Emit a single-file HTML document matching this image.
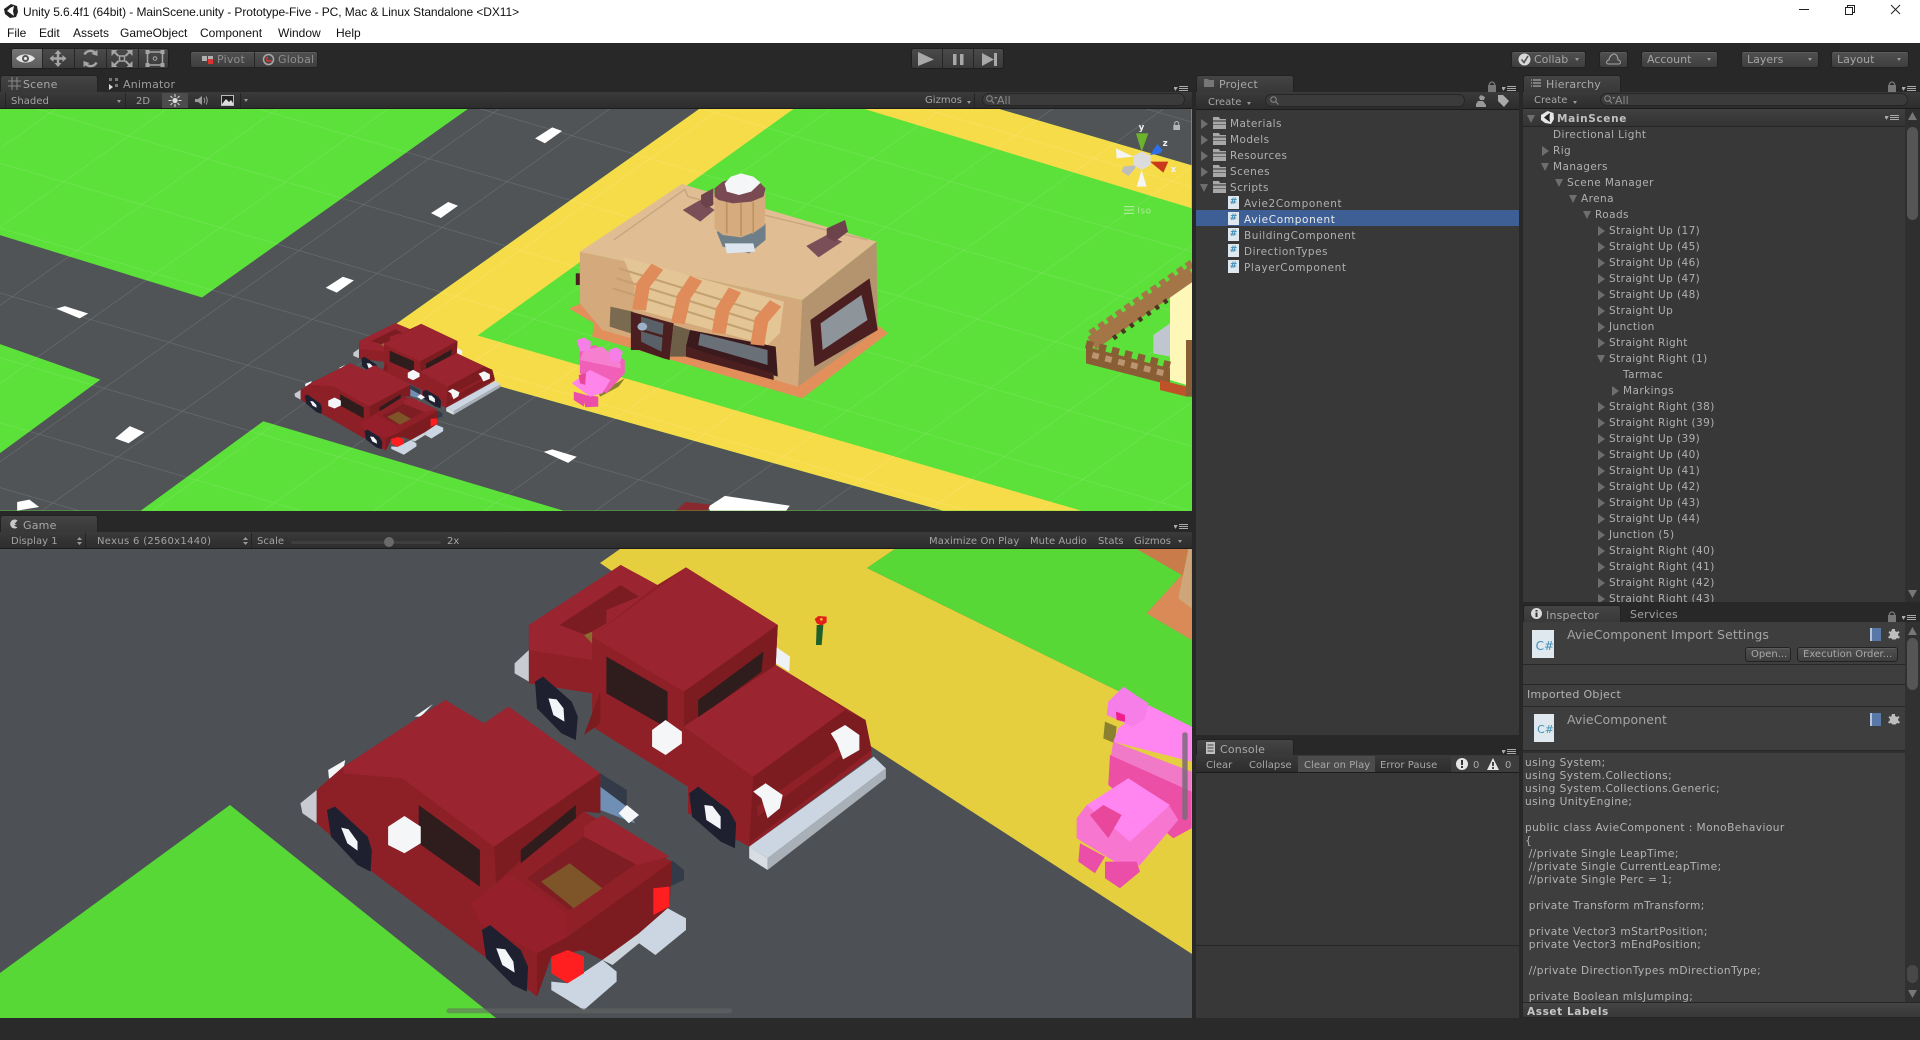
<!DOCTYPE html>
<html><head><meta charset="utf-8"><title>Unity</title>
<style>
html,body{margin:0;padding:0;width:1920px;height:1040px;overflow:hidden;background:#2a2a2a}
body{position:relative;font-family:"DejaVu Sans","Liberation Sans",sans-serif;font-size:10.5px;color:#b0b0b0}
.b{position:absolute;box-sizing:border-box}
.t{position:absolute;white-space:nowrap;line-height:18px;height:16px;letter-spacing:.42px}
.t[style*="font-size:10px"]{letter-spacing:.03px}
.t[style*="font-size:11px"]{letter-spacing:.2px}
.t[style*="font-size:12.5px"]{letter-spacing:.08px}
.a::before,.o::before{content:"";position:absolute;top:4px;left:-11px}
.a::before{border-left:7px solid #6e6e6e;border-top:5px solid transparent;border-bottom:5px solid transparent}
.o::before{left:-12px;top:5px;border-top:8px solid #6e6e6e;border-left:4.5px solid transparent;border-right:4.5px solid transparent}
.tab{position:absolute;box-sizing:border-box;background:linear-gradient(#444,#383838);border:1px solid #222;border-bottom:0;border-radius:3px 3px 0 0}
.btn{position:absolute;box-sizing:border-box;background:linear-gradient(#505050,#3e3e3e);border:1px solid #222;border-radius:3px;box-shadow:inset 0 1px 0 #5c5c5c;line-height:15px;text-align:left;white-space:nowrap}
.caret{position:absolute;width:0;height:0;border-top:3px solid #999;border-left:2.5px solid transparent;border-right:2.5px solid transparent}
.bar{position:absolute;box-sizing:border-box;background:linear-gradient(#3a3a3a,#2d2d2d);border-bottom:1px solid #1c1c1c}
.search{position:absolute;box-sizing:border-box;background:#3b3b3b;border-radius:8px;border:1px solid #262626;color:#8a8a8a;line-height:13px;padding-left:14px;font-size:11px}
.cs{position:absolute;background:#dfe8ee;color:#3f8fb5;font-weight:bold;text-align:center;overflow:hidden;box-sizing:border-box}
.code{position:absolute;white-space:pre;line-height:13px;font-size:10.6px;color:#b4b4b4;letter-spacing:.43px}
svg{position:absolute;display:block}
</style></head><body>

<!-- title / menu -->
<div class="b" style="left:0;top:0;width:1920px;height:43px;background:#fff"></div>
<svg style="left:3px;top:3px" width="16" height="16" viewBox="0 0 16 16"><path d="M8 1 14 3 15 9 13 14 7 15 2 11 1 6Z" fill="#222"/><path d="M7 5 11 3 10 8 11 13 7 10 4 8Z" fill="#fff"/></svg>
<div class="b" style="left:23px;top:4px;height:16px;white-space:nowrap;color:#111;font:12px/16px 'Liberation Sans',sans-serif;letter-spacing:-.08px">Unity 5.6.4f1 (64bit) - MainScene.unity - Prototype-Five - PC, Mac &amp; Linux Standalone &lt;DX11&gt;</div>
<div class="b" style="left:7px;top:25px;color:#111;font:12px/16px 'Liberation Sans',sans-serif">File</div>
<div class="b" style="left:39px;top:25px;color:#111;font:12px/16px 'Liberation Sans',sans-serif">Edit</div>
<div class="b" style="left:73px;top:25px;color:#111;font:12px/16px 'Liberation Sans',sans-serif">Assets</div>
<div class="b" style="left:120px;top:25px;color:#111;font:12px/16px 'Liberation Sans',sans-serif">GameObject</div>
<div class="b" style="left:200px;top:25px;color:#111;font:12px/16px 'Liberation Sans',sans-serif">Component</div>
<div class="b" style="left:278px;top:25px;color:#111;font:12px/16px 'Liberation Sans',sans-serif">Window</div>
<div class="b" style="left:336px;top:25px;color:#111;font:12px/16px 'Liberation Sans',sans-serif">Help</div>
<svg style="left:1789px;top:0" width="125" height="20" viewBox="0 0 125 20"><path d="M10 9.5h10" stroke="#222"/><path d="M56.500 7.500h7v7h-7zM58.500 7.500v-2h7v7h-2" fill="none" stroke="#222"/><path d="M102 5 111 14M111 5 102 14" stroke="#222"/></svg>

<!-- main toolbar -->
<div class="b" style="left:0;top:43px;width:1920px;height:32px;background:#282828"></div>
<div class="b" style="left:11px;top:48px;width:158px;height:21px;background:linear-gradient(#4a4a4a,#3a3a3a);border:1px solid #1f1f1f;border-radius:3px"></div>
<div class="b" style="left:12px;top:49px;width:30px;height:19px;background:linear-gradient(#767676,#5c5c5c);border-radius:2px 0 0 2px"></div>
<div class="b" style="left:74px;top:49px;width:1px;height:19px;background:#262626"></div>
<div class="b" style="left:106px;top:49px;width:1px;height:19px;background:#262626"></div>
<div class="b" style="left:138px;top:49px;width:1px;height:19px;background:#262626"></div>
<div class="b" style="left:42px;top:49px;width:1px;height:19px;background:#262626"></div>
<svg style="left:11px;top:48px" width="158" height="21" viewBox="0 0 158 21">
<path d="M5 10.500C9 5 20 5 24 10.500 20 16 9 16 5 10.500Z" fill="#e6e6e6"/><circle cx="14.500" cy="10.500" r="3.500" fill="#555"/><circle cx="14.500" cy="10.500" r="1.500" fill="#eee"/>
<path d="M47 2 50.500 6H48.200V9.300H51.500V7L55.500 10.500 51.500 14V11.700H48.200V15H50.500L47 19 43.500 15H45.800V11.700H42.500V14L38.500 10.500 42.500 7V9.300H45.800V6H43.500Z" fill="#a5a5a5"/>
<g transform="translate(13.500 0)"><path d="M71 5.500A6.500 6.500 0 0 0 60 6.500M61 15.500A6.500 6.500 0 0 0 72 14.500" fill="none" stroke="#a5a5a5" stroke-width="2.500"/><path d="M67 6 73 8 73 2ZM65 15 59 13 59 19Z" fill="#a5a5a5"/></g>
<g transform="translate(17.500 0)"><path d="M85 3 90 8M102 3 97 8M85 18 90 13M102 18 97 13" fill="none" stroke="#a5a5a5" stroke-width="2"/><rect x="91" y="8" width="5" height="5" fill="none" stroke="#a5a5a5" stroke-width="1.500"/><path d="M83 2H89L83 8ZM104 2V8L98 2ZM83 19V13L89 19ZM104 19H98L104 13Z" fill="#a5a5a5"/></g>
<g transform="translate(17.500 0)"><rect x="119" y="4" width="15" height="13" fill="none" stroke="#a5a5a5" stroke-width="1.500"/><rect x="117" y="2" width="4" height="4" fill="#a5a5a5"/><rect x="132" y="2" width="4" height="4" fill="#a5a5a5"/><rect x="117" y="15" width="4" height="4" fill="#a5a5a5"/><rect x="132" y="15" width="4" height="4" fill="#a5a5a5"/><circle cx="126.500" cy="10.500" r="1.800" fill="none" stroke="#a5a5a5"/></g>
</svg>
<div class="btn" style="left:190px;top:51px;width:128px;height:17px"></div>
<div class="b" style="left:254px;top:52px;width:1px;height:15px;background:#262626"></div>
<svg style="left:202px;top:54px" width="12" height="11" viewBox="0 0 12 11"><rect x="0" y="2" width="5" height="5" fill="#b0b0b0"/><rect x="6" y="2" width="5" height="5" fill="#b0b0b0"/><rect x="6" y="5" width="5" height="5" fill="#d33"/></svg>
<div class="t" style="left:217px;top:51px;color:#8e8e8e;font-size:11px">Pivot</div>
<svg style="left:262px;top:53px" width="13" height="13" viewBox="0 0 13 13"><circle cx="6.500" cy="6.500" r="5" fill="none" stroke="#aaa" stroke-width="1.500"/><path d="M5 4V8H10" fill="none" stroke="#d33" stroke-width="1.500"/></svg>
<div class="t" style="left:278px;top:51px;color:#8e8e8e;font-size:11px">Global</div>

<div class="b" style="left:911px;top:48px;width:93px;height:21px;background:linear-gradient(#4a4a4a,#3a3a3a);border:1px solid #1f1f1f;border-radius:3px"></div>
<div class="b" style="left:942px;top:49px;width:1px;height:19px;background:#262626"></div>
<div class="b" style="left:973px;top:49px;width:1px;height:19px;background:#262626"></div>
<svg style="left:911px;top:48px" width="93" height="21" viewBox="0 0 93 21"><path d="M7 4 23 11.500 7 18Z" fill="#a8a8a8"/><rect x="42" y="6" width="3.500" height="11" fill="#a8a8a8"/><rect x="49" y="6" width="3.500" height="11" fill="#a8a8a8"/><path d="M71 5 83 11.500 71 18Z" fill="#a8a8a8"/><rect x="83" y="5" width="3" height="13" fill="#a8a8a8"/></svg>

<div class="btn" style="left:1511px;top:51px;width:75px;height:17px;padding-left:22px;color:#a4a4a4;font-size:11px">Collab</div>
<svg style="left:1518px;top:53px" width="13" height="13" viewBox="0 0 13 13"><circle cx="6.500" cy="6.500" r="6" fill="#d8d8d8"/><path d="M3.500 6.500 6 9.500 10 3" fill="none" stroke="#555" stroke-width="1.600"/></svg>
<div class="caret" style="left:1575px;top:58px"></div>
<div class="btn" style="left:1599px;top:51px;width:29px;height:17px"></div>
<svg style="left:1606px;top:53px" width="15" height="12" viewBox="0 0 15 12"><path d="M2 11C0 11 0 7 3 7 3 4 6 1 8 1 11 1 12 5 12 7 15 7 15 11 13 11Z" fill="none" stroke="#a8a8a8"/></svg>
<div class="btn" style="left:1641px;top:51px;width:77px;height:17px;padding-left:5px;color:#a4a4a4;font-size:11px">Account</div>
<div class="caret" style="left:1707px;top:58px"></div>
<div class="btn" style="left:1741px;top:51px;width:78px;height:17px;padding-left:5px;color:#a4a4a4;font-size:11px">Layers</div>
<div class="caret" style="left:1808px;top:58px"></div>
<div class="btn" style="left:1831px;top:51px;width:78px;height:17px;padding-left:5px;color:#a4a4a4;font-size:11px">Layout</div>
<div class="caret" style="left:1897px;top:58px"></div>

<!-- scene header -->
<div class="b" style="left:0;top:75px;width:1192px;height:17px;background:#282828"></div>
<div class="tab" style="left:0;top:75px;width:98px;height:17px"></div>
<svg style="left:8px;top:77px" width="13" height="13" viewBox="0 0 13 13"><path d="M4 0V13M9 0V13M0 4H13M0 9H13" stroke="#888"/></svg>
<div class="t" style="left:23px;top:76px;font-size:11px;color:#a8a8a8">Scene</div>
<svg style="left:108px;top:78px" width="12" height="13" viewBox="0 0 12 13"><rect x="1" y="0" width="3" height="3" fill="#777"/><rect x="7" y="0" width="3" height="3" fill="#777"/><rect x="7" y="6" width="3" height="3" fill="#777"/><path d="M1 6 5 9 1 12Z" fill="#ddd"/></svg>
<div class="t" style="left:123px;top:76px;font-size:11px;color:#9c9c9c">Animator</div>
<svg style="left:1174px;top:86px" width="16" height="6" viewBox="0 0 16 6"><path d="M0 1.500H3L1.500 4ZM5 .5H14M5 2.500H14M5 4.500H14" fill="#aaa" stroke="#aaa" stroke-width=".9"/></svg>
<div class="bar" style="left:0;top:92px;width:1192px;height:17px"></div>
<div class="t" style="left:11px;top:93px;font-size:10px;color:#a4a4a4">Shaded</div>
<div class="caret" style="left:117px;top:100px"></div>
<div class="b" style="left:5px;top:93px;width:1px;height:15px;background:#242424"></div>
<div class="b" style="left:125px;top:93px;width:1px;height:15px;background:#242424"></div>
<div class="t" style="left:136px;top:93px;font-size:10px;color:#a4a4a4">2D</div>
<div class="b" style="left:162px;top:93px;width:26px;height:15px;background:#4c4c4c"></div>
<svg style="left:168px;top:94px" width="14" height="13" viewBox="0 0 14 13"><circle cx="7" cy="6.500" r="2.600" fill="#ddd"/><path d="M7 0V3M7 10V13M0.500 6.500H3.500M10.500 6.500H13.500M2.500 2 4.500 4M11.500 2 9.500 4M2.500 11 4.500 9M11.500 11 9.500 9" stroke="#ddd"/></svg>
<svg style="left:195px;top:94px" width="14" height="13" viewBox="0 0 14 13"><path d="M0 5H3L7 2V11L3 8H0Z" fill="#999"/><path d="M9 4Q10.500 6.500 9 9M11 2.500Q13.500 6.500 11 10.500" fill="none" stroke="#999"/></svg>
<svg style="left:221px;top:95px" width="13" height="11" viewBox="0 0 13 11"><rect x=".5" y=".5" width="12" height="10" fill="#222" stroke="#bbb"/><path d="M1 9 5 4 8 7 10 5 12 8V10H1Z" fill="#ddd"/></svg>
<div class="b" style="left:240px;top:93px;width:1px;height:15px;background:#242424"></div>
<div class="caret" style="left:244px;top:99px"></div>
<div class="t" style="left:925px;top:92px;font-size:10px;color:#a4a4a4">Gizmos</div>
<div class="caret" style="left:967px;top:101px"></div>
<div class="b" style="left:974px;top:93px;width:1px;height:15px;background:#242424"></div>
<div class="search" style="left:982px;top:93px;width:203px;height:13px">All</div>
<svg style="left:986px;top:95px" width="12" height="9" viewBox="0 0 12 9"><circle cx="3.500" cy="3.500" r="2.800" fill="none" stroke="#8a8a8a"/><path d="M5.500 5.500 8 8.500" stroke="#8a8a8a"/><path d="M8 2H11.500L9.750 4Z" fill="#8a8a8a"/></svg>

<!-- SCENE VIEW -->
<svg style="left:0;top:109px" width="1192" height="402" viewBox="0 109 1192 402">
<defs>
<pattern id="g" width="100" height="100" patternUnits="userSpaceOnUse" patternTransform="matrix(.64 .187 -.53 .375 202 298)"><path d="M0 0H100M0 0V100" fill="none" stroke="#fff" stroke-opacity=".16" stroke-width="1.800"/></pattern>
<g id="carA">
<path d="M575 310 610 270 610 365 575 340Z" fill="#c8ccd2"/>
<path d="M1215 260 1250 290 1248 335 1215 310Z" fill="#eef1f5"/>
<path d="M610 195 835 15 925 75 995 22 1220 195 1215 315 1435 480 1450 570 1450 590 1150 860 1000 760 1000 680 765 500 765 400 610 370Z" fill="#8f2027"/>
<path d="M610 195 835 15 925 75 765 230 765 300 610 270Z" fill="#9a2530"/>
<path d="M685 195 835 75 880 110 800 150 800 190 750 225Z" fill="#7a1c22"/>
<path d="M745 225 765 215 765 250Z" fill="#8a6a30"/>
<path d="M765 230 995 22 1220 195 990 395Z" fill="#9a2530"/>
<path d="M990 395 1220 195 1215 315 990 500Z" fill="#7c1c20"/>
<path d="M800 290 950 395 950 505 800 400Z" fill="#2f1c1c"/>
<path d="M1025 420 1185 275 1180 335 1025 475Z" fill="#2f1c1c"/>
<path d="M990 500 1215 315 1385 450 1160 650Z" fill="#9a2530"/>
<path d="M1160 650 1385 450 1435 480 1450 570 1150 850Z" fill="#7c1c20"/>
<path d="M1170 740 1400 540 1400 565 1170 770Z" fill="#8f2027"/>
<path d="M745 525 785 395 785 490Z" fill="#7c1c20"/>
<path d="M1150 860 1455 590 1485 625 1195 895Z" fill="#ccd6e2"/>
<path d="M1150 860 1195 895 1195 930 1150 895Z" fill="#d8dde4"/>
<path d="M1195 895 1485 625 1485 655 1195 930Z" fill="#a9b0b8"/>
<path d="M625 365 645 350 715 425 730 470 725 540 690 520 630 445Z" fill="#1e2030"/>
<path d="M658 415 678 418 695 445 697 485 670 465Z" fill="#f3f5f8"/>
<path d="M1003 700 1025 680 1100 750 1118 790 1115 865 1080 845 1010 770Z" fill="#1e2030"/>
<path d="M1040 735 1060 738 1080 770 1080 808 1045 780Z" fill="#f3f5f8"/>
<path d="M945 480 985 515 985 550 945 585 912 560 912 510Z" fill="#f4f6f8"/>
<path d="M1350 520 1385 495 1420 525 1420 570 1380 598 1365 550Z" fill="#f4f6f8"/>
<path d="M1160 695 1190 670 1232 705 1225 745 1195 775 1180 715Z" fill="#f4f6f8"/>
</g>
<g id="carB">
<path d="M785 640 850 690 850 740 785 690Z" fill="#333a48"/>
<path d="M960 900 990 930 990 960 955 980Z" fill="#333a48"/>
<path d="M785 680 850 740 870 790 785 750Z" fill="#6f8fb5"/>
<path d="M830 760 850 735 880 765 855 790Z" fill="#f4f6f8"/>
<path d="M330 470 375 432 345 470Z" fill="#f4f6f8"/>
<path d="M118 630 160 600 150 660 120 655Z" fill="#f4f6f8"/>
<path d="M50 730 90 690 90 790 55 760Z" fill="#c8ccd2"/>
<path d="M90 690 155 620 405 420 500 490 560 440 785 640 785 755 745 755 960 905 955 1040 880 1120 790 1200 740 1170 665 1190 630 1310 490 1180 220 930 90 790Z" fill="#8d1f27"/>
<path d="M155 620 405 420 500 490 560 440 785 640 525 860 300 655 155 640Z" fill="#9a2530"/>
<path d="M525 860 785 640 785 760 745 755 590 900 530 970Z" fill="#7c1c20"/>
<path d="M340 735 490 870 490 980 340 850Z" fill="#2f1c1c"/>
<path d="M590 870 725 735 725 815 590 915Z" fill="#2f1c1c"/>
<path d="M530 970 745 755 960 905 705 1130 470 1030Z" fill="#8f2027"/>
<path d="M605 955 745 830 875 910 710 1050Z" fill="#7e1d23"/>
<path d="M745 800 790 765 955 890 875 915 745 830Z" fill="#9a2530"/>
<path d="M640 965 710 910 790 985 720 1045Z" fill="#7d5528"/>
<path d="M705 1130 960 905 955 1040 880 1120 790 1200 740 1170 665 1190 630 1310 630 1180Z" fill="#7c1c20"/>
<path d="M470 1030 560 940 705 1060 705 1130 630 1180 490 1090Z" fill="#951f2a"/>
<path d="M115 750 135 740 215 830 225 870 222 935 190 915 125 830Z" fill="#1e2030"/>
<path d="M150 803 168 808 190 845 190 872 165 850Z" fill="#f3f5f8"/>
<path d="M495 1110 515 1095 590 1170 608 1220 605 1295 570 1275 505 1195Z" fill="#1e2030"/>
<path d="M530 1165 552 1168 572 1205 575 1238 545 1215Z" fill="#f3f5f8"/>
<path d="M305 768 345 800 345 850 305 880 265 855 265 800Z" fill="#f4f6f8"/>
<path d="M790 1200 880 1120 880 1150 815 1215Z" fill="#ccd4dc"/>
<path d="M665 1265 705 1270 790 1200 825 1235 825 1265 745 1350 665 1290Z" fill="#ccd6e2"/>
<path d="M880 1120 950 1045 995 1075 995 1110 920 1185 880 1150Z" fill="#ccd6e2"/>
<path d="M665 1190 705 1170 745 1190 745 1240 705 1270 665 1240Z" fill="#ff1e20"/>
<path d="M915 985 955 980 955 1040 915 1065Z" fill="#ff1e20"/>
</g>
</defs>
<rect x="0" y="109" width="1192" height="402" fill="#5ce03a"/>
<g transform="scale(1.2245)">
<!-- roads -->
<path d="M816 89H973V135Z" fill="#505457"/>
<path d="M382 89H571L296 284 770 417H460L215 344 115 417H0V370L82 310 0 281V192L165 243Z" fill="#505457"/>
<path d="M571 89H648L390 274 883 417H770L296 284Z" fill="#f7dc4a"/>
<path d="M706 89H816L973 135V170Z" fill="#f7dc4a"/>
<rect x="0" y="89" width="973" height="328" fill="url(#g)"/>
<!-- dashes -->
<path d="M437 113 451 104 459 107 445 117ZM352 174 366 165 374 168 360 178ZM266 235 280 226 289 229 275 239Z" fill="#fff"/>
<path d="M46 252 53 250 72 256 65 260ZM94 358 106 348 118 353 105 362ZM444 369 451 367 471 373 464 378Z" fill="#fff"/>
<path d="M14 410 24 408 32 414 14 417ZM578 414 592 405 645 413 642 417H580Z" fill="#fff"/>
<path d="M552 417 560 410 580 412 578 417Z" fill="#8a2a30"/>
</g>
<!-- building (zoom coords) -->
<g transform="translate(280 160) scale(.408 .3333)">
<path d="M708 445 760 420 1470 500 1490 520 1280 715 765 530 770 490Z" fill="#e28f5c"/>
<path d="M725 340 735 340 735 375 725 375Z" fill="#4b1f20"/>
<path d="M735 275 1280 420 1270 680 790 510 735 430Z" fill="#d4aa7c"/>
<path d="M1280 420 1462 245 1465 510 1270 680Z" fill="#b4946f"/>
<path d="M735 275 985 72 1462 245 1280 420Z" fill="#e0bd93"/>
<path d="M818 240 992 88 1000 110 1440 240" fill="none" stroke="#c8a67f" stroke-width="4"/>
<path d="M987 150 1030 120 1065 150 1030 185Z" fill="#7b4f57"/>
<path d="M1032 130V105L1062 85V135L1045 145Z" fill="#6c434b"/>
<path d="M1290 258 1340 225 1378 245 1320 292Z" fill="#7b4f57"/>
<path d="M1340 232V205L1385 180 1392 215 1360 245Z" fill="#6c434b"/>
<path d="M1070 215 1190 190 1190 240 1150 280 1085 260Z" fill="#6f7f8a"/>
<path d="M1090 250 1160 250 1165 275 1095 280Z" fill="#dde6ee"/>
<path d="M1065 110 1190 100 1188 195 1165 215 1130 232 1085 225 1065 205Z" fill="#d6ac7e"/>
<path d="M1095 125V220M1130 130V228M1160 125V222" stroke="#bb9266" stroke-width="4"/>
<path d="M1065 85 1085 65 1125 50 1170 60 1190 85 1185 110 1155 125 1110 130 1075 120 1065 110Z" fill="#7a4a52"/>
<path d="M1090 70 1105 50 1130 40 1160 50 1178 68 1155 95 1125 105 1095 95Z" fill="#f4f6f8"/>
<path d="M810 440 865 455 860 520 808 500Z" fill="#7a6a50"/>
<path d="M860 455 965 490 955 600 940 595 880 570 860 570Z" fill="#4b1f20"/>
<path d="M885 470 940 490 935 575 885 545Z" fill="#5a6068"/>
<path d="M885 510 940 530" stroke="#4b1f20" stroke-width="7"/>
<circle cx="888" cy="500" r="12" fill="#9cb0c8"/>
<path d="M965 495 1005 510 995 590 955 590Z" fill="#6d5e48"/>
<path d="M1005 510 1215 560 1220 650 995 560Z" fill="#3a1a1c"/>
<path d="M1030 520 1195 570 1195 615 1025 555Z" fill="#6a7078"/>
<path d="M995 560 1210 640 1210 660 995 590Z" fill="#4b1f20"/>
<path d="M840 290 1235 425 1225 520 1195 555 1150 540 865 445 870 380Z" fill="#e4c596"/>
<path d="M830 325 1190 460M825 355 1180 490M815 385 1170 520" fill="none" stroke="#c4a070" stroke-width="6"/>
<path d="M925 320 890 375 880 450M1020 355 990 410 975 490M1115 390 1085 450 1075 520M1215 430 1180 480 1170 555" fill="none" stroke="#e08c5a" stroke-width="34"/>
<path d="M1300 480 1445 355 1465 510 1310 620Z" fill="#4b1f20"/>
<path d="M1325 490 1425 405 1440 480 1330 570Z" fill="#8d949a"/>
<!-- pig -->
<path d="M780 700 845 655 830 680 785 710Z" fill="#8a8030"/>
<path d="M735 575 770 555 845 600 845 640 800 700 735 640Z" fill="#f05fb8"/>
<path d="M745 570 790 560 835 610 835 625 735 600Z" fill="#f77fcf"/>
<path d="M727 540 745 533 762 545 760 570 735 575Z" fill="#f57ee8"/>
<path d="M805 570 825 562 840 575 835 605 812 605Z" fill="#f57ee8"/>
<path d="M720 695 750 705 745 740 720 720Z" fill="#ea4ea8"/>
<path d="M745 705 780 710 780 740 748 742Z" fill="#ea4ea8"/>
<path d="M715 670 760 630 810 660 790 700 760 710Z" fill="#ff85ea"/>
<path d="M732 645 750 640 748 675 735 670Z" fill="#e8479c"/>
<use href="#carA" transform="translate(-48 485) scale(.396 .3005)"/>
<use href="#carB" transform="translate(16 486) scale(.386 .295)"/>
</g>
<!-- fence etc (zoom11) -->
<g transform="translate(1060 240) scale(.3333)">
<path d="M330 155 396 110V440L330 420Z" fill="#fdf8b8"/>
<path d="M95 310 396 100" stroke="#a47647" stroke-width="44" fill="none"/>
<path d="M92 282 396 70" stroke="#a47647" stroke-width="24" stroke-dasharray="20 12" fill="none"/>
<path d="M160 295 330 175" stroke="#4a3520" stroke-width="14" stroke-dasharray="12 19" fill="none"/>
<path d="M280 285 330 250V350L280 340Z" fill="#c0c6d0"/>
<path d="M78 320 330 385V435L78 370Z" fill="#8a5e34"/>
<path d="M78 312 330 377" stroke="#8a5e34" stroke-width="24" stroke-dasharray="22 18" fill="none"/>
<path d="M97 345 312 400" stroke="#bb9570" stroke-width="18" stroke-dasharray="20 20" fill="none"/>
<path d="M300 420 380 440V470L300 450Z" fill="#c0522a"/>
<path d="M378 300H396V470H378Z" fill="#8a5e34"/>
</g>
<!-- gizmo (zoom8) -->
<g transform="translate(1060 100) scale(.3333)">
<path d="M228 100H265L245 155Z" fill="#6cb32c"/>
<path d="M270 165 292 132 308 150 300 160Z" fill="#2f6fe8"/>
<path d="M270 185 325 185 310 218Z" fill="#c9391a"/>
<path d="M168 145 220 170 170 175Z" fill="#f5f5f5"/>
<path d="M245 210 260 260H230Z" fill="#f5f5f5"/>
<path d="M230 195 190 200 185 215 205 228 222 210Z" fill="#bdbdbd"/>
<path d="M220 168 245 155 272 168 272 195 245 210 220 195Z" fill="#dcdcdc"/>
<text x="236" y="90" fill="#f0f0f0" font-size="26" font-weight="bold" font-family="DejaVu Sans,sans-serif">y</text>
<text x="308" y="138" fill="#f0f0f0" font-size="26" font-weight="bold" font-family="DejaVu Sans,sans-serif">z</text>
<text x="332" y="216" fill="#f0f0f0" font-size="26" font-weight="bold" font-family="DejaVu Sans,sans-serif">x</text>
<path d="M192 320H222M192 330H222M192 340H222" stroke="#d5f0c8" stroke-opacity=".75" stroke-width="3"/>
<text x="232" y="340" fill="#d5f0c8" fill-opacity=".7" font-size="26" font-family="DejaVu Sans,sans-serif" letter-spacing="2">Iso</text>
<rect x="340" y="75" width="20" height="15" fill="#b4b4b4"/><path d="M344 75V68Q350 60 356 68V75" fill="none" stroke="#b4b4b4" stroke-width="3"/>
</g>
</svg>

<!-- Game header -->
<div class="b" style="left:0;top:511px;width:1192px;height:21px;background:#282828"></div>
<div class="tab" style="left:0;top:515px;width:98px;height:17px"></div>
<svg style="left:8px;top:519px" width="12" height="10" viewBox="0 0 12 10"><path d="M9.500 1.500A4.500 4.500 0 1 0 9.500 8.500L6 6.500 9 5H6.500Z" fill="#c8c8c8"/></svg>
<div class="t" style="left:23px;top:517px;font-size:11px;color:#a8a8a8">Game</div>
<svg style="left:1174px;top:524px" width="16" height="6" viewBox="0 0 16 6"><path d="M0 1.500H3L1.500 4ZM5 .5H14M5 2.500H14M5 4.500H14" fill="#aaa" stroke="#aaa" stroke-width=".9"/></svg>
<div class="bar" style="left:0;top:532px;width:1192px;height:17px"></div>
<div class="t" style="left:11px;top:533px;font-size:10px;color:#a4a4a4">Display 1</div>
<svg style="left:77px;top:537px" width="5" height="8" viewBox="0 0 5 8"><path d="M0 3 2.500 0 5 3ZM0 5 2.500 8 5 5Z" fill="#999"/></svg>
<div class="b" style="left:85px;top:533px;width:1px;height:15px;background:#242424"></div>
<div class="t" style="left:97px;top:533px;font-size:10px;color:#a4a4a4;letter-spacing:.32px">Nexus 6 (2560x1440)</div>
<svg style="left:243px;top:537px" width="5" height="8" viewBox="0 0 5 8"><path d="M0 3 2.500 0 5 3ZM0 5 2.500 8 5 5Z" fill="#999"/></svg>
<div class="b" style="left:251px;top:533px;width:1px;height:15px;background:#242424"></div>
<div class="t" style="left:257px;top:533px;font-size:10px;color:#a4a4a4">Scale</div>
<div class="b" style="left:291px;top:541px;width:150px;height:3px;background:#3e3e3e;border-radius:2px"></div>
<div class="b" style="left:384px;top:537px;width:10px;height:10px;background:#6a6a6a;border-radius:50%"></div>
<div class="t" style="left:447px;top:533px;font-size:10px;color:#a4a4a4">2x</div>
<div class="t" style="left:929px;top:533px;font-size:10px;color:#a4a4a4;letter-spacing:.1px">Maximize On Play</div>
<div class="t" style="left:1030px;top:533px;font-size:10px;color:#a4a4a4">Mute Audio</div>
<div class="t" style="left:1098px;top:533px;font-size:10px;color:#a4a4a4">Stats</div>
<div class="t" style="left:1134px;top:533px;font-size:10px;color:#a4a4a4">Gizmos</div>
<div class="caret" style="left:1178px;top:540px"></div>

<!-- GAME VIEW -->
<svg style="left:0;top:549px" width="1192" height="469" viewBox="0 549 1192 469">
<rect x="0" y="549" width="1192" height="469" fill="#4d5156"/>
<path d="M600 563 620 549H895L867 568 1192 727V954L872 747Z" fill="#e6cf3f"/>
<path d="M895 549H1192V727L867 568Z" fill="#57d836"/>
<path d="M0 973 230 805 496 1018H0Z" fill="#57d836"/>
<g transform="translate(800 545) scale(.3333)">
<path d="M1010 12H1175V285L1040 205 1145 90Z" fill="#c97b4a"/>
<path d="M1040 205 1145 90 1175 120V285Z" fill="#d98a57"/>
<path d="M1135 160 1165 12H1175V190Z" fill="#cfa57a"/>
<path d="M915 530 950 545 945 595 910 580Z" fill="#8a8030"/>
<path d="M955 550 1045 480 1175 545V650L940 590Z" fill="#ff85f0"/>
<path d="M940 590 1175 680V770L930 650Z" fill="#f07ac8"/>
<path d="M930 630 1175 740V850L1120 880 925 720Z" fill="#ec4fa6"/>
<path d="M925 470 970 425 1045 475 1035 520 1000 545 920 510Z" fill="#f57ee8"/>
<path d="M948 500 975 510 975 530 950 525Z" fill="#ee1f8a"/>
<path d="M830 820 860 780 1110 785 1135 825 1020 960 1000 970 960 960 830 880Z" fill="#f777d0"/>
<path d="M860 780 985 700 1110 780 990 890Z" fill="#ff85f0"/>
<path d="M870 810 910 780 965 810 925 880Z" fill="#e8479c"/>
<path d="M840 895 915 935 885 985 835 950Z" fill="#ea4ea8"/>
<path d="M915 950 1010 950 1020 980 960 1030 915 1000Z" fill="#ea4ea8"/>
<rect x="1147" y="562" width="16" height="263" rx="7" fill="#7a6a78" fill-opacity=".85"/>
<path d="M50 240 70 240 65 300 48 300Z" fill="#1f5f2a"/>
<path d="M44 222 55 213 80 215 80 232 65 242 50 235Z" fill="#e2201c"/>
<circle cx="64" cy="223" r="4" fill="#f0c020"/>
</g>
<g transform="translate(280 560) scale(.408 .3333)">
<use href="#carA"/>
<use href="#carB"/>
<rect x="408" y="1345" width="700" height="15" rx="7" fill="#666" fill-opacity=".55"/>
</g>
</svg>

<!-- right column base -->
<div class="b" style="left:1192px;top:75px;width:728px;height:943px;background:#282828"></div>

<!-- PROJECT -->
<div class="tab" style="left:1196px;top:75px;width:98px;height:17px"></div>
<svg style="left:1204px;top:78px" width="11" height="10" viewBox="0 0 11 10"><path d="M0 1H4L5 2H10V9H0Z" fill="#777"/></svg>
<div class="t" style="left:1219px;top:76px;font-size:11px;color:#a8a8a8">Project</div>
<svg style="left:1488px;top:81px" width="8" height="11" viewBox="0 0 8 11"><rect x="0" y="4" width="8" height="7" fill="#777"/><path d="M1.500 4V2.500Q4 -.5 6.500 2.500V4" fill="none" stroke="#777" stroke-width="1.200"/></svg>
<svg style="left:1502px;top:86px" width="16" height="6" viewBox="0 0 16 6"><path d="M0 1.500H3L1.500 4ZM5 .5H14M5 2.500H14M5 4.500H14" fill="#aaa" stroke="#aaa" stroke-width=".9"/></svg>
<div class="b" style="left:1196px;top:92px;width:323px;height:643px;background:#383838"></div>
<div class="bar" style="left:1196px;top:92px;width:323px;height:18px"></div>
<div class="t" style="left:1208px;top:94px;font-size:10px;color:#a8a8a8">Create</div>
<div class="caret" style="left:1247px;top:102px"></div>
<div class="search" style="left:1265px;top:94px;width:200px;height:13px;padding-left:0"></div>
<svg style="left:1270px;top:96px" width="9" height="9" viewBox="0 0 9 9"><circle cx="3.500" cy="3.500" r="2.800" fill="none" stroke="#888"/><path d="M5.500 5.500 8.500 8.500" stroke="#888"/></svg>
<svg style="left:1475px;top:95px" width="14" height="12" viewBox="0 0 14 12"><path d="M6 0 10 2 9 5H5L4 2ZM3 6H8L11 10V12H1V9Z" fill="#999"/></svg>
<svg style="left:1497px;top:95px" width="12" height="12" viewBox="0 0 12 12"><path d="M1 0H6L12 6 7 12 1 6Z" fill="#aaa"/></svg>

<!-- folders -->
<svg width="0" height="0" style="left:0;top:0"><defs><g id="fd"><path d="M0 1H6L7 3H13V13H0Z" fill="#a8a8a8"/><path d="M0 4H13V6H0ZM0 8H13V9H0Z" fill="#6d6d6d"/></g></defs></svg>
<svg style="left:1213px;top:116px" width="14" height="90" viewBox="0 0 14 90"><use href="#fd"/><use href="#fd" y="16"/><use href="#fd" y="32"/><use href="#fd" y="48"/><use href="#fd" y="64"/></svg>
<div class="t a" style="left:1212px;top:115px"></div>
<div class="t a" style="left:1212px;top:131px"></div>
<div class="t a" style="left:1212px;top:147px"></div>
<div class="t a" style="left:1212px;top:163px"></div>
<div class="t o" style="left:1212px;top:179px"></div>
<div class="t" style="left:1230px;top:115px">Materials</div>
<div class="t" style="left:1230px;top:131px">Models</div>
<div class="t" style="left:1230px;top:147px">Resources</div>
<div class="t" style="left:1230px;top:163px">Scenes</div>
<div class="t" style="left:1230px;top:179px">Scripts</div>
<div class="b" style="left:1196px;top:210px;width:323px;height:16px;background:#3e5f96"></div>
<div class="cs" style="left:1228px;top:196px;width:11px;height:13px;font:bold 9px/13px 'DejaVu Sans',sans-serif">#</div>
<div class="cs" style="left:1228px;top:212px;width:11px;height:13px;font:bold 9px/13px 'DejaVu Sans',sans-serif">#</div>
<div class="cs" style="left:1228px;top:228px;width:11px;height:13px;font:bold 9px/13px 'DejaVu Sans',sans-serif">#</div>
<div class="cs" style="left:1228px;top:244px;width:11px;height:13px;font:bold 9px/13px 'DejaVu Sans',sans-serif">#</div>
<div class="cs" style="left:1228px;top:260px;width:11px;height:13px;font:bold 9px/13px 'DejaVu Sans',sans-serif">#</div>
<div class="t" style="left:1244px;top:195px;letter-spacing:.6px">Avie2Component</div>
<div class="t" style="left:1244px;top:211px;color:#eaeaea;letter-spacing:.65px">AvieComponent</div>
<div class="t" style="left:1244px;top:227px;letter-spacing:.5px">BuildingComponent</div>
<div class="t" style="left:1244px;top:243px;letter-spacing:.5px">DirectionTypes</div>
<div class="t" style="left:1244px;top:259px;letter-spacing:.6px">PlayerComponent</div>

<!-- CONSOLE -->
<div class="tab" style="left:1196px;top:739px;width:98px;height:17px"></div>
<svg style="left:1206px;top:742px" width="9" height="12" viewBox="0 0 9 12"><rect width="9" height="12" fill="#c0c0c0"/><path d="M1.500 3H7.500M1.500 6H7.500M1.500 9H7.500" stroke="#444"/></svg>
<div class="t" style="left:1220px;top:741px;font-size:11px;color:#a8a8a8">Console</div>
<svg style="left:1502px;top:749px" width="16" height="6" viewBox="0 0 16 6"><path d="M0 1.500H3L1.500 4ZM5 .5H14M5 2.500H14M5 4.500H14" fill="#aaa" stroke="#aaa" stroke-width=".9"/></svg>
<div class="b" style="left:1196px;top:755px;width:323px;height:263px;background:#383838"></div>
<div class="bar" style="left:1196px;top:755px;width:323px;height:18px"></div>
<div class="b" style="left:1298px;top:756px;width:77px;height:16px;background:#4b4b4b"></div>
<div class="t" style="left:1206px;top:757px;font-size:10px;color:#a8a8a8">Clear</div>
<div class="t" style="left:1249px;top:757px;font-size:10px;color:#a8a8a8">Collapse</div>
<div class="t" style="left:1304px;top:757px;font-size:10px;color:#a8a8a8">Clear on Play</div>
<div class="t" style="left:1380px;top:757px;font-size:10px;color:#a8a8a8">Error Pause</div>
<div class="b" style="left:1451px;top:756px;width:68px;height:16px;background:#3d3d3d"></div>
<svg style="left:1456px;top:757px" width="60" height="14" viewBox="0 0 60 14"><circle cx="6" cy="7" r="6" fill="#e6e6e6"/><rect x="5" y="3" width="2" height="5" fill="#333"/><rect x="5" y="9" width="2" height="2" fill="#333"/><path d="M37 1 43 13H31Z" fill="#e6e6e6"/><rect x="36" y="5" width="2" height="4" fill="#444"/><rect x="36" y="10" width="2" height="2" fill="#444"/></svg>
<div class="t" style="left:1473px;top:757px;font-size:10px;color:#a8a8a8">0</div>
<div class="t" style="left:1505px;top:757px;font-size:10px;color:#a8a8a8">0</div>
<div class="b" style="left:1196px;top:945px;width:323px;height:1px;background:#262626"></div>

<!-- HIERARCHY -->
<div class="tab" style="left:1523px;top:75px;width:98px;height:17px"></div>
<svg style="left:1531px;top:79px" width="11" height="9" viewBox="0 0 11 9"><path d="M2 1H10M2 4H10M2 7H10M0 0V2M0 3V5M0 6V8" stroke="#c0c0c0"/></svg>
<div class="t" style="left:1546px;top:76px;font-size:11px;color:#a8a8a8">Hierarchy</div>
<svg style="left:1888px;top:81px" width="8" height="11" viewBox="0 0 8 11"><rect x="0" y="4" width="8" height="7" fill="#777"/><path d="M1.500 4V2.500Q4 -.5 6.500 2.500V4" fill="none" stroke="#777" stroke-width="1.200"/></svg>
<svg style="left:1902px;top:86px" width="16" height="6" viewBox="0 0 16 6"><path d="M0 1.500H3L1.500 4ZM5 .5H14M5 2.500H14M5 4.500H14" fill="#aaa" stroke="#aaa" stroke-width=".9"/></svg>
<div class="b" style="left:1523px;top:92px;width:397px;height:510px;background:#383838;overflow:hidden"></div>
<div class="bar" style="left:1523px;top:92px;width:397px;height:17px"></div>
<div class="t" style="left:1534px;top:92px;font-size:10px;color:#a8a8a8">Create</div>
<div class="caret" style="left:1573px;top:101px"></div>
<div class="search" style="left:1600px;top:93px;width:308px;height:13px">All</div>
<svg style="left:1604px;top:95px" width="12" height="9" viewBox="0 0 12 9"><circle cx="3.500" cy="3.500" r="2.800" fill="none" stroke="#8a8a8a"/><path d="M5.500 5.500 8 8.500" stroke="#8a8a8a"/><path d="M8 2H11.500L9.750 4Z" fill="#8a8a8a"/></svg>
<div class="b" style="left:1523px;top:109px;width:382px;height:18px;background:linear-gradient(#404040,#343434);border-bottom:1px solid #262626"></div>
<div class="t o" style="left:1539px;top:110px"></div>
<svg style="left:1541px;top:111px" width="13" height="13" viewBox="0 0 13 13"><path d="M6.500 0 12.500 2 13 8 10 13 4 12 0 9 0 4Z" fill="#e6e6e6"/><path d="M6 4 9 2 8.500 6.500 9 11 5.500 8.500 3 6.500Z" fill="#222"/></svg>
<div class="t" style="left:1557px;top:110px;font-weight:bold;color:#c0c0c0;letter-spacing:.65px">MainScene</div>
<svg style="left:1885px;top:115px" width="16" height="6" viewBox="0 0 16 6"><path d="M0 1.500H3L1.500 4ZM5 .5H14M5 2.500H14M5 4.500H14" fill="#aaa" stroke="#aaa" stroke-width=".9"/></svg>

<div class="b" style="left:1523px;top:127px;width:382px;height:475px;overflow:hidden">
<div class="t" style="left:30px;top:-1px">Directional Light</div>
<div class="t a" style="left:30px;top:15px">Rig</div>
<div class="t o" style="left:30px;top:31px">Managers</div>
<div class="t o" style="left:44px;top:47px">Scene Manager</div>
<div class="t o" style="left:58px;top:63px">Arena</div>
<div class="t o" style="left:72px;top:79px">Roads</div>
<div class="t a" style="left:86px;top:95px">Straight Up (17)</div>
<div class="t a" style="left:86px;top:111px">Straight Up (45)</div>
<div class="t a" style="left:86px;top:127px">Straight Up (46)</div>
<div class="t a" style="left:86px;top:143px">Straight Up (47)</div>
<div class="t a" style="left:86px;top:159px">Straight Up (48)</div>
<div class="t a" style="left:86px;top:175px">Straight Up</div>
<div class="t a" style="left:86px;top:191px">Junction</div>
<div class="t a" style="left:86px;top:207px">Straight Right</div>
<div class="t o" style="left:86px;top:223px">Straight Right (1)</div>
<div class="t" style="left:100px;top:239px">Tarmac</div>
<div class="t a" style="left:100px;top:255px">Markings</div>
<div class="t a" style="left:86px;top:271px">Straight Right (38)</div>
<div class="t a" style="left:86px;top:287px">Straight Right (39)</div>
<div class="t a" style="left:86px;top:303px">Straight Up (39)</div>
<div class="t a" style="left:86px;top:319px">Straight Up (40)</div>
<div class="t a" style="left:86px;top:335px">Straight Up (41)</div>
<div class="t a" style="left:86px;top:351px">Straight Up (42)</div>
<div class="t a" style="left:86px;top:367px">Straight Up (43)</div>
<div class="t a" style="left:86px;top:383px">Straight Up (44)</div>
<div class="t a" style="left:86px;top:399px">Junction (5)</div>
<div class="t a" style="left:86px;top:415px">Straight Right (40)</div>
<div class="t a" style="left:86px;top:431px">Straight Right (41)</div>
<div class="t a" style="left:86px;top:447px">Straight Right (42)</div>
<div class="t a" style="left:86px;top:463px">Straight Right (43)</div>
</div>
<div class="b" style="left:1905px;top:109px;width:15px;height:493px;background:#2f2f2f"></div>
<div class="b" style="left:1907px;top:127px;width:11px;height:93px;background:#555;border-radius:6px"></div>
<svg style="left:1908px;top:112px" width="9" height="8" viewBox="0 0 9 8"><path d="M0 8 4.500 0 9 8Z" fill="#777"/></svg>
<svg style="left:1908px;top:590px" width="9" height="8" viewBox="0 0 9 8"><path d="M0 0 4.500 8 9 0Z" fill="#777"/></svg>

<!-- INSPECTOR -->
<div class="tab" style="left:1523px;top:605px;width:98px;height:18px"></div>
<svg style="left:1531px;top:608px" width="11" height="11" viewBox="0 0 11 11"><circle cx="5.500" cy="5.500" r="5.500" fill="#dcdcdc"/><rect x="4.500" y="2" width="2" height="1.500" fill="#333"/><rect x="4.500" y="4.500" width="2" height="4.500" fill="#333"/></svg>
<div class="t" style="left:1546px;top:607px;font-size:11px;color:#a8a8a8">Inspector</div>
<div class="t" style="left:1630px;top:606px;font-size:11px;color:#a0a0a0">Services</div>
<svg style="left:1888px;top:611px" width="8" height="11" viewBox="0 0 8 11"><rect x="0" y="4" width="8" height="7" fill="#777"/><path d="M1.500 4V2.500Q4 -.5 6.500 2.500V4" fill="none" stroke="#777" stroke-width="1.200"/></svg>
<svg style="left:1902px;top:615px" width="16" height="6" viewBox="0 0 16 6"><path d="M0 1.500H3L1.500 4ZM5 .5H14M5 2.500H14M5 4.500H14" fill="#aaa" stroke="#aaa" stroke-width=".9"/></svg>
<div class="b" style="left:1523px;top:622px;width:397px;height:396px;background:#3e3e3e"></div>
<div class="b" style="left:1523px;top:664px;width:382px;height:1px;background:#282828"></div>
<div class="b" style="left:1523px;top:684px;width:382px;height:1px;background:#282828"></div>
<div class="b" style="left:1523px;top:706px;width:382px;height:1px;background:#282828"></div>
<div class="b" style="left:1523px;top:750px;width:382px;height:3px;background:#303030;border-top:1px solid #282828"></div>
<div class="cs" style="left:1532px;top:630px;width:22px;height:28px;padding-top:9px;font:12px/14px 'DejaVu Sans',sans-serif;text-align:right">C#</div>
<div class="t" style="left:1567px;top:626px;font-size:12.5px;color:#a4a4a4">AvieComponent Import Settings</div>
<div class="btn" style="left:1745px;top:647px;width:46px;height:15px;line-height:13px;padding-left:5px;font-size:10px;color:#a8a8a8">Open...</div>
<div class="btn" style="left:1797px;top:647px;width:101px;height:15px;line-height:13px;padding-left:5px;font-size:10px;color:#a8a8a8">Execution Order...</div>
<svg style="left:1870px;top:627px" width="30" height="15" viewBox="0 0 30 15"><rect x="0" y="1" width="11" height="13" fill="#5878a8"/><rect x="0" y="1" width="2" height="13" fill="#b4c4dc"/><path d="M22 2h3v2l2 1 1.500-1 1 1.500-1.500 1.500.5 2 1.500 1-1 1.500-2-.5-1.500 1.500h-3L21 11l-2 .5-1-1.500 1.500-1 .5-2-1.500-1.500 1-1.500L21 5Z" fill="#bdbdbd"/></svg>
<div class="t" style="left:1527px;top:686px;font-size:11px;color:#b4b4b4;letter-spacing:.3px">Imported Object</div>
<div class="cs" style="left:1534px;top:714px;width:20px;height:28px;padding-top:9px;font:11px/14px 'DejaVu Sans',sans-serif;text-align:right">C#</div>
<div class="t" style="left:1567px;top:711px;font-size:12.5px;color:#a4a4a4">AvieComponent</div>
<svg style="left:1870px;top:712px" width="30" height="15" viewBox="0 0 30 15"><rect x="0" y="1" width="11" height="13" fill="#5878a8"/><rect x="0" y="1" width="2" height="13" fill="#b4c4dc"/><path d="M22 2h3v2l2 1 1.500-1 1 1.500-1.500 1.500.5 2 1.500 1-1 1.500-2-.5-1.500 1.500h-3L21 11l-2 .5-1-1.500 1.500-1 .5-2-1.500-1.500 1-1.500L21 5Z" fill="#bdbdbd"/></svg>
<div class="code" style="left:1525px;top:757px">using System;
using System.Collections;
using System.Collections.Generic;
using UnityEngine;

public class AvieComponent : MonoBehaviour
{
 //private Single LeapTime;
 //private Single CurrentLeapTime;
 //private Single Perc = 1;

 private Transform mTransform;

 private Vector3 mStartPosition;
 private Vector3 mEndPosition;

 //private DirectionTypes mDirectionType;

 private Boolean mIsJumping;</div>
<div class="b" style="left:1905px;top:622px;width:15px;height:380px;background:#313131"></div>
<div class="b" style="left:1907px;top:638px;width:11px;height:52px;background:#555;border-radius:6px"></div>
<div class="b" style="left:1907px;top:965px;width:11px;height:18px;background:#484848;border-radius:6px"></div>
<svg style="left:1908px;top:627px" width="9" height="8" viewBox="0 0 9 8"><path d="M0 8 4.500 0 9 8Z" fill="#777"/></svg>
<svg style="left:1908px;top:990px" width="9" height="8" viewBox="0 0 9 8"><path d="M0 0 4.500 8 9 0Z" fill="#777"/></svg>
<div class="b" style="left:1523px;top:1002px;width:397px;height:16px;background:linear-gradient(#444,#383838);border-top:1px solid #262626;border-bottom:1px solid #262626"></div>
<div class="t" style="left:1527px;top:1003px;font-weight:bold;color:#c8c8c8;letter-spacing:.6px">Asset Labels</div>

</body></html>
